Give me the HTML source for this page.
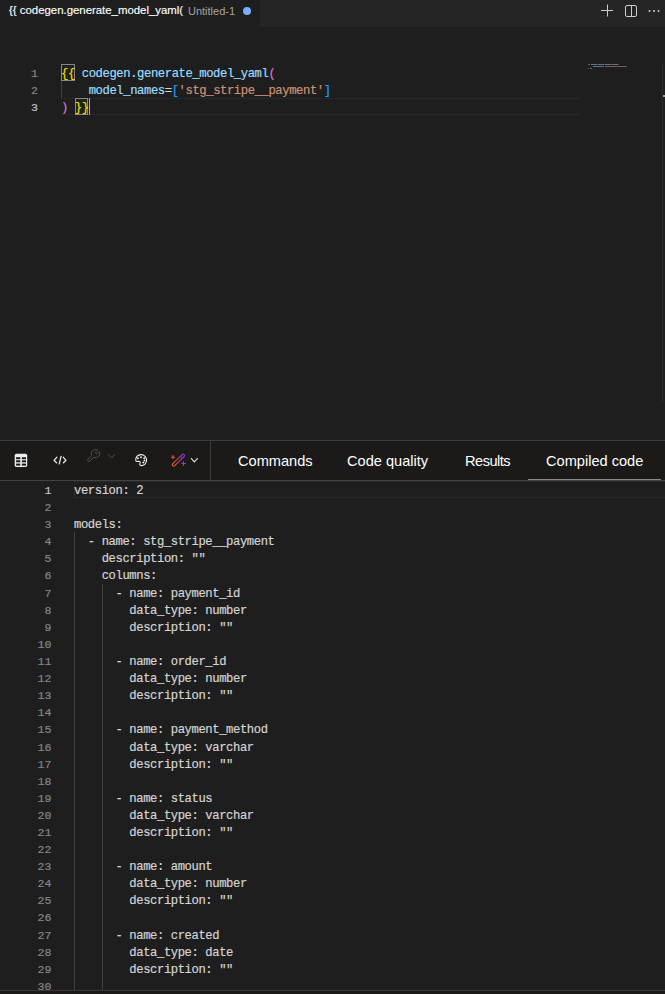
<!DOCTYPE html>
<html><head><meta charset="utf-8">
<style>
*{margin:0;padding:0;box-sizing:border-box}
html,body{width:665px;height:994px;overflow:hidden;background:#1e1e1e}
body{position:relative;font-family:"Liberation Sans",sans-serif}
.abs{position:absolute}
#tabbar{left:0;top:0;width:665px;height:27px;background:#252526}
#tab{left:0;top:0;width:260px;height:27px;background:#1e1e1e}
.mono{font-family:"Liberation Mono",monospace;font-size:12.2px;letter-spacing:-0.40px;line-height:17px;white-space:pre;-webkit-text-stroke:0.2px currentColor}
.ln{position:absolute;padding-top:1px;text-align:right;color:#858585;font-size:11.6px;letter-spacing:0}
.code{position:absolute;padding-top:2px;color:#d4d4d4}
.y{color:#ffd700}.p{color:#da70d6}.b{color:#179fff}.v{color:#9cdcfe}.s{color:#ce9178}
#panel{left:0;top:440px;width:665px;height:554px;background:#1e1e1e}
#toolbar{left:0;top:440px;width:665px;height:41px;background:#1b1a19;border-top:1px solid #3d3a39;border-bottom:1px solid #454141}
.ptab{position:absolute;top:451px;font-size:14.6px;color:#ffffff;line-height:20px;white-space:nowrap}
</style></head><body>
<div id="tabbar" class="abs"></div>
<div id="tab" class="abs"></div>
<div class="abs" style="left:9px;top:0px;font-size:11.4px;line-height:20px;color:#ffffff;-webkit-text-stroke:0.15px #fff;white-space:nowrap">{{ codegen.generate_model_yaml(</div>
<div class="abs" style="left:188px;top:1px;font-size:11px;line-height:20px;color:#a6a6a6;white-space:nowrap">Untitled-1</div>
<div class="abs" style="left:243px;top:7px;width:8px;height:8px;border-radius:50%;background:#78aefc"></div>

<!-- top right actions -->
<svg class="abs" style="left:600px;top:4px" width="14" height="14" viewBox="0 0 14 14"><path d="M7.5 0.5V12.5M1 6.5H13" stroke="#cccccc" stroke-width="1" fill="none"/></svg>
<svg class="abs" style="left:624px;top:4px" width="14" height="14" viewBox="0 0 14 14"><rect x="1.5" y="1.5" width="11" height="11" rx="1.5" stroke="#cccccc" fill="none"/><path d="M7.5 1.5V12.5" stroke="#cccccc"/></svg>
<svg class="abs" style="left:647px;top:9px" width="14" height="4" viewBox="0 0 14 4"><circle cx="2.5" cy="2" r="1" fill="#cccccc"/><circle cx="7" cy="2" r="1" fill="#cccccc"/><circle cx="11.5" cy="2" r="1" fill="#cccccc"/></svg>

<!-- top editor -->
<div class="abs" style="left:61px;top:98px;width:519px;height:17px;border-top:1px solid #282828;border-bottom:1px solid #282828"></div>
<div class="abs" style="left:61px;top:81px;width:1px;height:17px;background:#404040"></div>
<div class="abs" style="left:61px;top:64px;width:14px;height:17px;border:1px solid #888;background:rgba(0,100,0,0.1)"></div>
<div class="abs" style="left:75px;top:98px;width:13px;height:17px;border:1px solid #888;background:rgba(0,100,0,0.1)"></div>
<div class="mono">
<div class="ln" style="left:21px;top:64px;width:17px">1</div>
<div class="ln" style="left:21px;top:81px;width:17px">2</div>
<div class="ln" style="left:21px;top:98px;width:17px;color:#c6c6c6">3</div>
<div class="code" style="left:61px;top:64px"><span class="y">{{</span> <span class="v">codegen.generate_model_yaml</span><span class="p">(</span></div>
<div class="code" style="left:61px;top:81px">    <span class="v">model_names</span>=<span class="b">[</span><span class="s">'stg_stripe__payment'</span><span class="b">]</span></div>
<div class="code" style="left:61px;top:98px"><span class="p">)</span> <span class="y">}}</span></div>
</div>
<div class="abs" style="left:89px;top:98px;width:1px;height:17px;background:#aeafad"></div>

<!-- minimap -->
<div class="abs" style="left:588px;top:64px;width:2px;height:1px;background:#6a6440"></div>
<div class="abs" style="left:591px;top:64px;width:28px;height:1px;background:repeating-linear-gradient(90deg,#5d7688 0 6px,#3a4650 6px 7px)"></div>
<div class="abs" style="left:593px;top:66px;width:11px;height:1px;background:#5d7688"></div>
<div class="abs" style="left:605px;top:66px;width:21px;height:1px;background:#7a5c48"></div>
<div class="abs" style="left:626px;top:66px;width:1px;height:1px;background:#3e6a90"></div>
<div class="abs" style="left:588px;top:68px;width:1px;height:1px;background:#6a5070"></div>
<div class="abs" style="left:590px;top:68px;width:2px;height:1px;background:#6a6440"></div>
<!-- overview ruler -->
<div class="abs" style="left:662px;top:64px;width:1px;height:338px;background:#2e2e2e"></div>
<div class="abs" style="left:663px;top:95px;width:2px;height:2px;background:#a0a0a0"></div>

<!-- panel -->
<div id="panel" class="abs"></div>
<div id="toolbar" class="abs"></div>
<div class="abs" style="left:210px;top:441px;width:1px;height:39px;background:#3d3a39"></div>
<div class="abs" style="left:528px;top:479px;width:133px;height:1px;background:#8c8787"></div>
<!-- toolbar icons -->
<svg class="abs" style="left:12px;top:451px" width="18" height="18" viewBox="0 0 18 18">
<rect x="2.7" y="2.8" width="12.5" height="13.1" rx="1.6" fill="#ececec"/>
<g fill="#1b1a19"><rect x="4.1" y="6.2" width="4.2" height="2.0"/><rect x="9.9" y="6.2" width="4.1" height="2.0"/>
<rect x="4.1" y="9.3" width="4.2" height="2.0"/><rect x="9.9" y="9.3" width="4.1" height="2.0"/>
<rect x="4.1" y="12.6" width="4.2" height="2.0"/><rect x="9.9" y="12.6" width="4.1" height="2.0"/></g>
</svg>
<svg class="abs" style="left:50px;top:452px" width="20" height="18" viewBox="0 0 20 18">
<path d="M6.8 5.3L4.1 8.4L6.6 10.7M13.4 5.3L15.9 8.4L13.4 10.7" stroke="#e6e6e6" stroke-width="1.3" fill="none" stroke-linecap="round" stroke-linejoin="round"/>
<path d="M11.1 4.4L9.2 11.9" stroke="#e6e6e6" stroke-width="1.3" fill="none" stroke-linecap="round"/>
</svg>
<svg class="abs" style="left:84px;top:447px" width="34" height="20" viewBox="0 0 34 20">
<path d="M7.76 8.5L4.08 12.18A1.3 1.3 0 0 0 5.92 14.02L9.6 10.34A4.2 4.2 0 0 0 15.14 4.52L13.34 6.32A1.1 1.1 0 0 1 11.78 4.76L13.58 2.96A4.2 4.2 0 0 0 7.76 8.5Z" stroke="#4e4e4e" stroke-width="1" fill="none" stroke-linejoin="round"/>
<path d="M24 7.2L27.6 11.0L30.9 7.2" stroke="#4c4c4c" stroke-width="1" fill="none"/>
</svg>
<svg class="abs" style="left:131px;top:451px" width="20" height="18" viewBox="0 0 20 18">
<path d="M4.8 9.6C4.2 6.2 6.6 3.6 10 3.6C13.4 3.6 15.6 6.2 15.6 9.1C15.6 12.4 13.1 14.6 10.2 14.6C8.6 14.6 8.4 13.4 9.1 11.9C9.7 10.6 8.6 10.2 7.4 10.4C6.2 10.6 5.0 10.6 4.8 9.6Z" stroke="#eeeeee" stroke-width="1.1" fill="none" stroke-linejoin="round"/>
<circle cx="10" cy="6.3" r="0.95" fill="#eeeeee"/><circle cx="6.9" cy="7.2" r="0.95" fill="#eeeeee"/><circle cx="13.2" cy="7.2" r="0.95" fill="#eeeeee"/><circle cx="13.5" cy="9.5" r="0.95" fill="#eeeeee"/><circle cx="12.3" cy="11.5" r="0.95" fill="#eeeeee"/>
</svg>
<svg class="abs" style="left:168px;top:450px" width="34" height="20" viewBox="0 0 34 20">
<defs><linearGradient id="wg" gradientUnits="userSpaceOnUse" x1="5" y1="15" x2="16" y2="5"><stop offset="0" stop-color="#f0600a"/><stop offset="0.5" stop-color="#c04080"/><stop offset="1" stop-color="#9035e8"/></linearGradient></defs>
<path d="M5.7 14.7L15.2 5.6" stroke="url(#wg)" stroke-width="3.8" stroke-linecap="round" fill="none"/>
<path d="M5.7 14.7L15.2 5.6" stroke="#1b1a19" stroke-width="1.6" stroke-linecap="round" fill="none"/>
<path d="M12.6 6.3L14.5 8.2" stroke="#9a3ad8" stroke-width="1" fill="none"/>
<path d="M5 5.6V8.8M3.4 7.2H6.6" stroke="#e4580e" stroke-width="1.1" fill="none" stroke-linecap="round"/>
<path d="M15.5 11.5V15.5M13.5 13.5H17.5" stroke="#8a38f0" stroke-width="1.1" fill="none" stroke-linecap="round"/>
<path d="M23 8.2L26.3 11.9L29.8 8.2" stroke="#e0e0e0" stroke-width="1.1" fill="none"/>
</svg>
<div class="ptab" style="left:238px">Commands</div>
<div class="ptab" style="left:347px">Code quality</div>
<div class="ptab" style="left:465px;letter-spacing:-0.5px">Results</div>
<div class="ptab" style="left:546px">Compiled code</div>

<!-- bottom editor decorations -->
<div class="abs" style="left:74px;top:481px;width:591px;height:17px;border:1px solid #282828;border-right:none"></div>
<div class="abs" style="left:74px;top:532px;width:1px;height:458px;background:#404040"></div>
<div class="abs" style="left:102px;top:584px;width:1px;height:406px;background:#404040"></div>
<!-- bottom editor -->
<div id="beditor" class="mono">
<div class="ln" style="left:20.5px;top:481px;width:31px;color:#c6c6c6">1</div>
<div class="code" style="left:74px;top:481px">version: 2</div>
<div class="ln" style="left:20.5px;top:498px;width:31px;color:#858585">2</div>
<div class="ln" style="left:20.5px;top:515px;width:31px;color:#858585">3</div>
<div class="code" style="left:74px;top:515px">models:</div>
<div class="ln" style="left:20.5px;top:532px;width:31px;color:#858585">4</div>
<div class="code" style="left:74px;top:532px">  - name: stg_stripe__payment</div>
<div class="ln" style="left:20.5px;top:549px;width:31px;color:#858585">5</div>
<div class="code" style="left:74px;top:549px">    description: ""</div>
<div class="ln" style="left:20.5px;top:566px;width:31px;color:#858585">6</div>
<div class="code" style="left:74px;top:566px">    columns:</div>
<div class="ln" style="left:20.5px;top:584px;width:31px;color:#858585">7</div>
<div class="code" style="left:74px;top:584px">      - name: payment_id</div>
<div class="ln" style="left:20.5px;top:601px;width:31px;color:#858585">8</div>
<div class="code" style="left:74px;top:601px">        data_type: number</div>
<div class="ln" style="left:20.5px;top:618px;width:31px;color:#858585">9</div>
<div class="code" style="left:74px;top:618px">        description: ""</div>
<div class="ln" style="left:20.5px;top:635px;width:31px;color:#858585">10</div>
<div class="ln" style="left:20.5px;top:652px;width:31px;color:#858585">11</div>
<div class="code" style="left:74px;top:652px">      - name: order_id</div>
<div class="ln" style="left:20.5px;top:669px;width:31px;color:#858585">12</div>
<div class="code" style="left:74px;top:669px">        data_type: number</div>
<div class="ln" style="left:20.5px;top:686px;width:31px;color:#858585">13</div>
<div class="code" style="left:74px;top:686px">        description: ""</div>
<div class="ln" style="left:20.5px;top:703px;width:31px;color:#858585">14</div>
<div class="ln" style="left:20.5px;top:720px;width:31px;color:#858585">15</div>
<div class="code" style="left:74px;top:720px">      - name: payment_method</div>
<div class="ln" style="left:20.5px;top:738px;width:31px;color:#858585">16</div>
<div class="code" style="left:74px;top:738px">        data_type: varchar</div>
<div class="ln" style="left:20.5px;top:755px;width:31px;color:#858585">17</div>
<div class="code" style="left:74px;top:755px">        description: ""</div>
<div class="ln" style="left:20.5px;top:772px;width:31px;color:#858585">18</div>
<div class="ln" style="left:20.5px;top:789px;width:31px;color:#858585">19</div>
<div class="code" style="left:74px;top:789px">      - name: status</div>
<div class="ln" style="left:20.5px;top:806px;width:31px;color:#858585">20</div>
<div class="code" style="left:74px;top:806px">        data_type: varchar</div>
<div class="ln" style="left:20.5px;top:823px;width:31px;color:#858585">21</div>
<div class="code" style="left:74px;top:823px">        description: ""</div>
<div class="ln" style="left:20.5px;top:840px;width:31px;color:#858585">22</div>
<div class="ln" style="left:20.5px;top:857px;width:31px;color:#858585">23</div>
<div class="code" style="left:74px;top:857px">      - name: amount</div>
<div class="ln" style="left:20.5px;top:874px;width:31px;color:#858585">24</div>
<div class="code" style="left:74px;top:874px">        data_type: number</div>
<div class="ln" style="left:20.5px;top:891px;width:31px;color:#858585">25</div>
<div class="code" style="left:74px;top:891px">        description: ""</div>
<div class="ln" style="left:20.5px;top:908px;width:31px;color:#858585">26</div>
<div class="ln" style="left:20.5px;top:926px;width:31px;color:#858585">27</div>
<div class="code" style="left:74px;top:926px">      - name: created</div>
<div class="ln" style="left:20.5px;top:943px;width:31px;color:#858585">28</div>
<div class="code" style="left:74px;top:943px">        data_type: date</div>
<div class="ln" style="left:20.5px;top:960px;width:31px;color:#858585">29</div>
<div class="code" style="left:74px;top:960px">        description: ""</div>
<div class="ln" style="left:20.5px;top:977px;width:31px;color:#858585">30</div>
</div>
<div class="abs" style="left:0;top:990px;width:665px;height:1px;background:#3a3a3a"></div>
<div class="abs" style="left:0;top:991px;width:665px;height:3px;background:#1b1a19"></div>
</body></html>
